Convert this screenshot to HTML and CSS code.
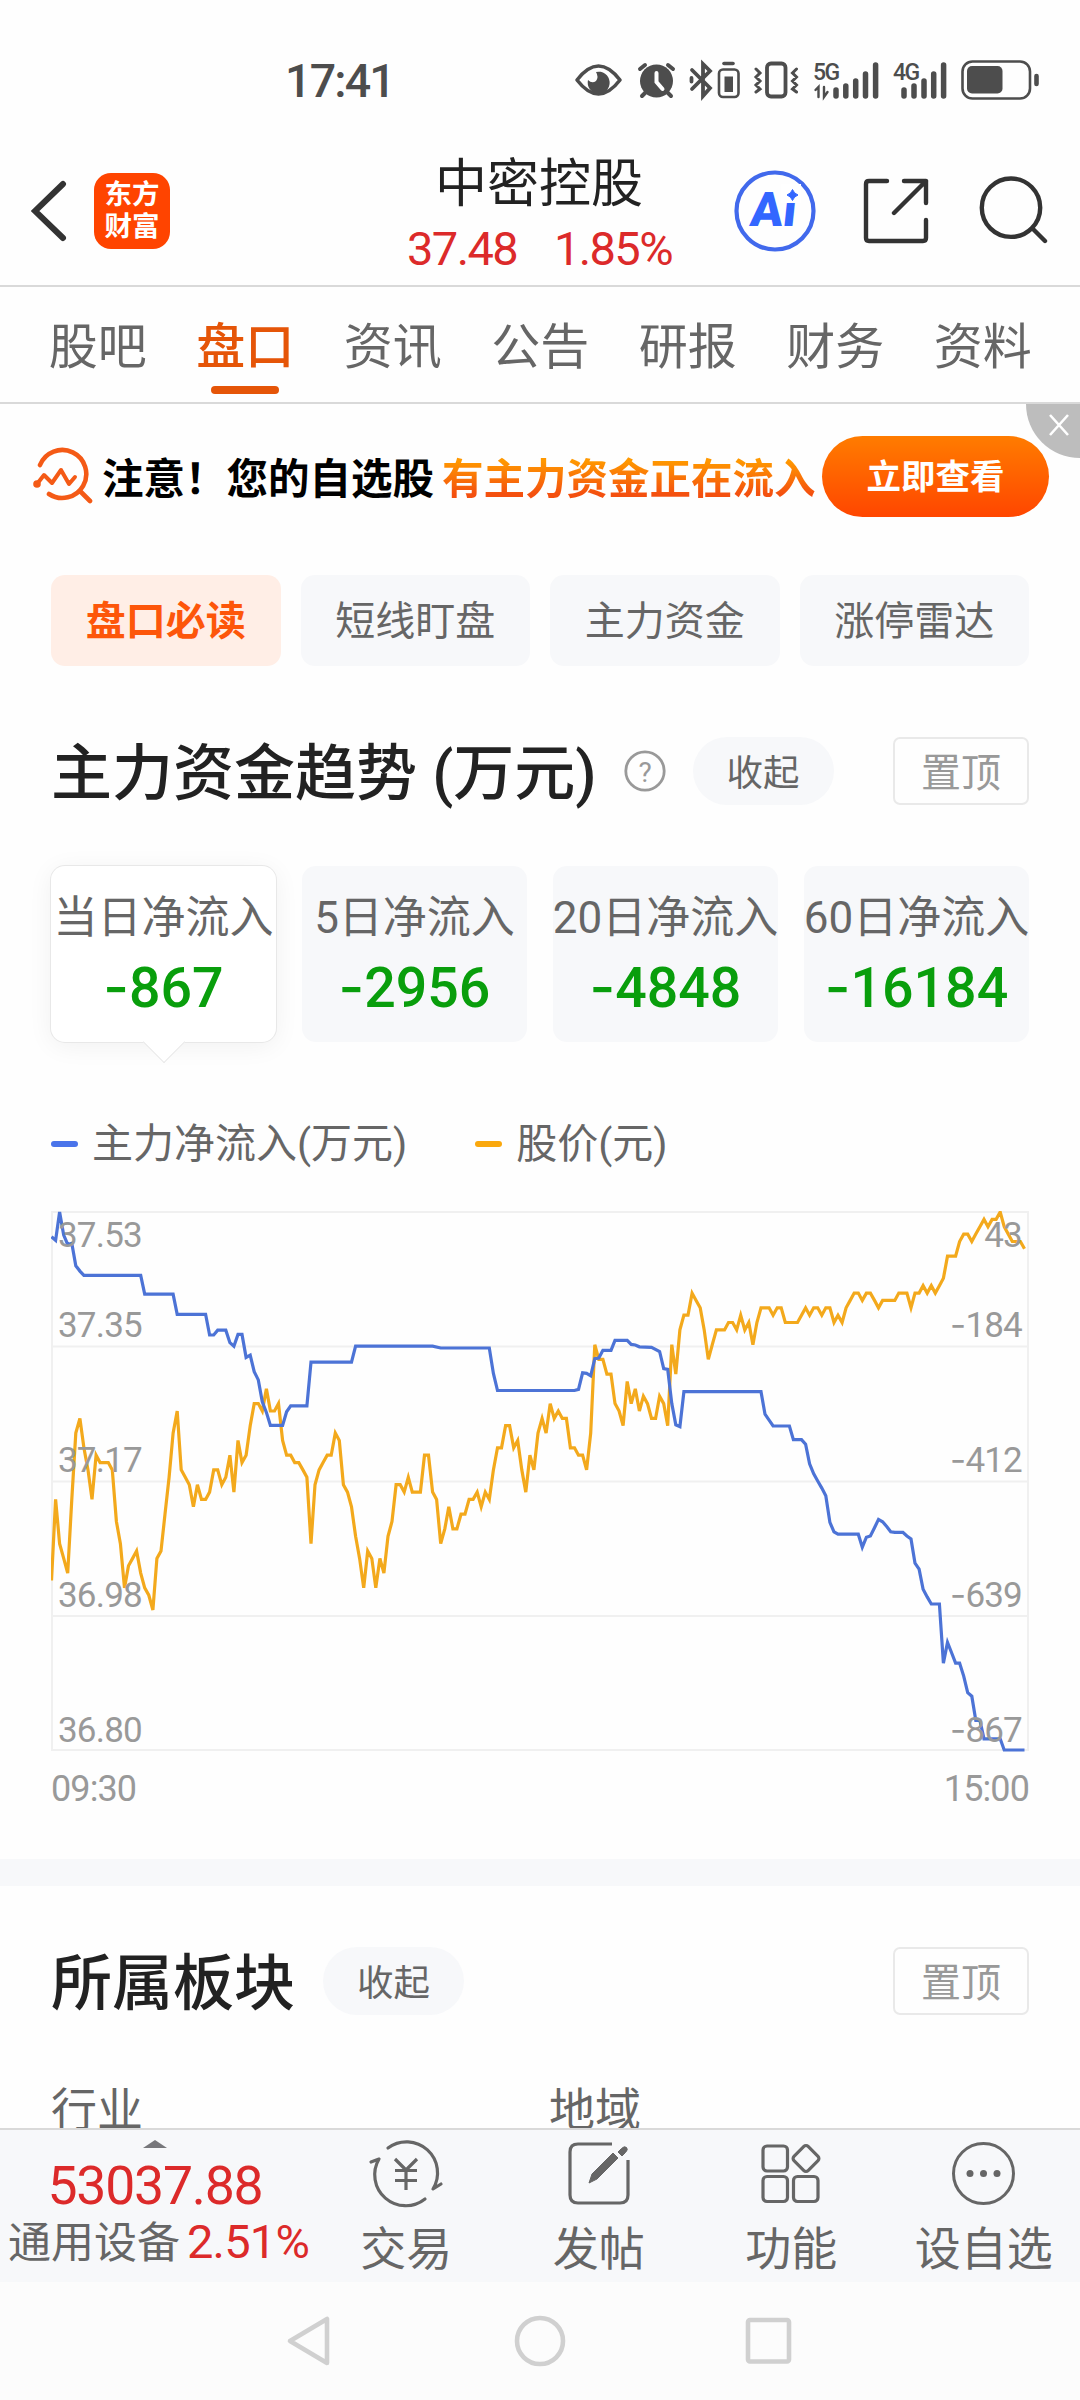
FILE: index.html
```html
<!DOCTYPE html>
<html lang="zh-CN">

<head>
    <meta charset="UTF-8">
    <meta name="viewport" content="width=device-width, initial-scale=1.0">
    <title>中密控股 - 盘口</title>
    <link rel="stylesheet" href="styles.css">
</head>

<body>
    <div class="status-bar">
        <span class="clock">17:41</span>
        <svg class="status-icons" width="475" height="48" viewBox="570 56 475 48" fill="none" stroke="#4d4d4d" stroke-width="3.6" stroke-linecap="round">
            <!-- eye -->
            <path d="M577 80Q598.500 52 620 80Q598.500 108 577 80Z" stroke-linejoin="round" />
            <path d="M596 72a11 11 0 1 1-8 8q4 4 8 1q3-4 0-9z" fill="#4d4d4d" stroke="none" />
            <!-- alarm -->
            <circle cx="656.500" cy="81" r="16.500" fill="#4d4d4d" stroke="none" />
            <path d="M640 69l5-4M673 69l-5-4M646 92l-4 4M667 92l4 4" stroke-width="4" />
            <path d="M656.500 73v9l6 7" stroke="#fff" stroke-width="4" />
            <!-- bluetooth + its battery -->
            <path d="M692 70l18 18-7 8V64l7 7-18 18M691.500 78v3.500" stroke-width="3.800" />
            <rect x="719" y="69.500" width="19.500" height="27.500" rx="4" stroke-width="2.600" />
            <path d="M724 63.500h9" stroke-width="3.600" />
            <path d="M724.500 76.500h8.500v15.500h-8.500z" fill="#4d4d4d" stroke="none" />
            <!-- vibrate -->
            <rect x="767" y="63.500" width="18.500" height="33" rx="4" stroke-width="3.800" />
            <path d="M756 69l4 4-4 4 4 4-4 4 4 4-4 3M796.500 69l-4 4 4 4-4 4 4 4-4 4 4 3" stroke-width="3" />
            <!-- signals -->
            <text class="net" x="813" y="80">5G</text>
            <path d="M815.500 90l3-3v10M824 87v10l3.500-5" stroke-width="2.400" />
            <path d="M836 90v6M845.800 86v10M855.700 81v15M865.500 74v22M875.600 65v31" stroke-width="5.500" />
            <text class="net" x="893" y="80">4G</text>
            <path d="M904 90v6M914 86v10M924 81v15M933.700 74v22M943.600 65v31" stroke-width="5.500" />
            <!-- battery -->
            <rect x="962.500" y="61.500" width="67.500" height="37" rx="10" stroke-width="2.600" />
            <rect x="967" y="66" width="35.500" height="27.500" rx="5" fill="#4d4d4d" stroke="none" />
            <path d="M1036.500 76v8" stroke-width="4.600" />
        </svg>
    </div>

    <header class="header">
        <svg class="back" width="40" height="64" viewBox="0 0 40 64" fill="none" stroke="#333" stroke-width="6" stroke-linecap="round" stroke-linejoin="miter">
            <path d="M32 5L4 32l28 27" />
        </svg>
        <div class="app-logo"><span>东方</span><span>财富</span></div>
        <div class="stock">
            <h1>中密控股</h1>
            <div class="quote"><span>37.48</span><span>1.85%</span></div>
        </div>
        <div class="header-actions">
            <svg width="82" height="82" viewBox="0 0 82 82">
                <circle cx="41" cy="41" r="38.500" fill="none" stroke="#4169ec" stroke-width="4.200" />
                <text class="ai" transform="translate(15 56) skewX(-6)">Ai</text>
                <path d="M47 14h20v19h-20z" fill="#fff" />
                <path d="M58.500 19.500q1.500 4 5.500 5.500q-4 1.500-5.500 5.500q-1.500-4-5.500-5.500q4-1.500 5.500-5.500z" fill="#3366ff" stroke="#3366ff" />
            </svg>
            <svg width="68" height="68" viewBox="0 0 68 68" fill="none" stroke="#333" stroke-width="4.400" stroke-linecap="round" stroke-linejoin="round">
                <path d="M26 4H8q-3 0-3 3v54q0 3 3 3h54q3 0 3-3V43M43 4h22v22M65 4L33 36" />
            </svg>
            <svg width="70" height="70" viewBox="0 0 70 70" fill="none" stroke="#333" stroke-width="4.400" stroke-linecap="round">
                <circle cx="33" cy="31.700" r="29.200" />
                <path d="M55 53l12 12" />
            </svg>
        </div>
    </header>

    <nav class="tabs">
        <a>股吧</a>
        <a class="active">盘口</a>
        <a>资讯</a>
        <a>公告</a>
        <a>研报</a>
        <a>财务</a>
        <a>资料</a>
    </nav>

    <div class="banner">
        <svg class="banner-icon" width="62" height="58" viewBox="0 0 62 58" fill="none" stroke="#f45a16" stroke-width="4.600" stroke-linecap="round" stroke-linejoin="round">
            <path d="M8 18a24 24 0 1 1 9 29M48 44l10 10" />
            <path d="M5 37l7-9 8 8 9-13 8 14 6-7" stroke-width="4" />
            <circle cx="5" cy="37" r="1.500" />
        </svg>
        <span class="banner-text">注意！您的自选股</span>
        <span class="banner-hot">有主力资金正在流入</span>
        <button class="banner-btn">立即查看</button>
        <span class="banner-close">
            <svg width="20" height="22" viewBox="0 0 20 22" stroke="#fff" stroke-width="2.600"><path d="M1 1l18 20M19 1L1 21" /></svg>
        </span>
    </div>

    <div class="chips">
        <span class="chip active">盘口必读</span>
        <span class="chip">短线盯盘</span>
        <span class="chip">主力资金</span>
        <span class="chip">涨停雷达</span>
    </div>

    <section class="trend">
        <div class="section-head">
            <h2>主力资金趋势 (万元)</h2>
            <svg class="help" width="44" height="44" viewBox="0 0 44 44">
                <circle cx="22" cy="22" r="19.200" fill="none" stroke="#999" stroke-width="2.800" />
                <text x="22" y="32.500" text-anchor="middle">?</text>
            </svg>
            <button class="fold">收起</button>
            <button class="pin">置顶</button>
        </div>

        <div class="cards">
            <div class="card active">
                <span>当日净流入</span>
                <b><i>-</i>867</b>
            </div>
            <div class="card">
                <span>5日净流入</span>
                <b><i>-</i>2956</b>
            </div>
            <div class="card">
                <span>20日净流入</span>
                <b><i>-</i>4848</b>
            </div>
            <div class="card">
                <span>60日净流入</span>
                <b><i>-</i>16184</b>
            </div>
        </div>

        <div class="legend">
            <span class="legend-item inflow">主力净流入(万元)</span>
            <span class="legend-item price">股价(元)</span>
        </div>

        <svg class="chart" width="978" height="542" viewBox="0 0 978 542">
            <path class="grid" d="M1 1h976v538H1zM1 135.500h976M1 270.500h976M1 405h976" />
            <polyline id="priceLine" class="line price-line" />
            <polyline id="inflowLine" class="line inflow-line" />
            <g class="axis">
                <text x="7" y="35.500">37.53</text>
                <text x="7" y="125.500">37.35</text>
                <text x="7" y="260.500">37.17</text>
                <text x="7" y="395.500">36.98</text>
                <text x="7" y="530.500">36.80</text>
            </g>
            <g class="axis axis-right">
                <text x="971" y="35.500">43</text>
                <text x="971" y="125.500"><tspan class="minus">-</tspan>184</text>
                <text x="971" y="260.500"><tspan class="minus">-</tspan>412</text>
                <text x="971" y="395.500"><tspan class="minus">-</tspan>639</text>
                <text x="971" y="530.500"><tspan class="minus">-</tspan>867</text>
            </g>
        </svg>
        <div class="times"><span>09:30</span><span>15:00</span></div>
    </section>

    <section class="plates">
        <div class="section-head">
            <h2>所属板块</h2>
            <button class="fold">收起</button>
            <button class="pin">置顶</button>
        </div>
        <div class="plate-cols"><span>行业</span><span>地域</span></div>
    </section>

    <footer class="toolbar">
        <div class="index">
            <span class="caret"></span>
            <span class="index-value">53037.88</span>
            <span class="index-name">通用设备<em>2.51%</em></span>
        </div>
        <div class="tool">
            <svg width="76" height="70" viewBox="0 0 76 70" fill="none" stroke="#666" stroke-width="3.200" stroke-linecap="round" stroke-linejoin="round">
                <path d="M20 10A31 31 0 0 1 65 51l8-5M57 61A31 31 0 0 1 11 21l-8 3" />
                <path d="M27 21l11 11 11-11M27 32.500h22M27 42.500h22M38 32v20" stroke-linecap="butt" />
            </svg>
            <span>交易</span>
        </div>
        <div class="tool">
            <svg width="70" height="70" viewBox="0 0 70 70" fill="none" stroke="#666" stroke-width="3.200">
                <path d="M48 6H14q-8 0-8 8v43q0 8 8 8h42q8 0 8-8V22" />
                <path d="M54 14l3.500-3.500q3-3 5-1t-1 5L58 18zM25 45l3-9 21-21 5 5-21 21z" fill="#666" stroke-width="1" />
            </svg>
            <span>发帖</span>
        </div>
        <div class="tool">
            <svg width="70" height="70" viewBox="0 0 70 70" fill="none" stroke="#666" stroke-width="3.200">
                <rect x="7" y="8" width="24.500" height="25" rx="4" />
                <rect x="7" y="38.500" width="24.500" height="25" rx="4" />
                <rect x="37.500" y="38.500" width="24.500" height="25" rx="4" />
                <rect x="40" y="10.500" width="20" height="20" rx="3" transform="rotate(45 50 20.500)" />
            </svg>
            <span>功能</span>
        </div>
        <div class="tool">
            <svg width="70" height="70" viewBox="0 0 70 70" fill="#666">
                <circle cx="34.500" cy="35.500" r="30" fill="none" stroke="#666" stroke-width="3" />
                <circle cx="21" cy="35.500" r="3.500" />
                <circle cx="34.500" cy="35.500" r="3.500" />
                <circle cx="48" cy="35.500" r="3.500" />
            </svg>
            <span>设自选</span>
        </div>
    </footer>

    <div class="system-nav">
        <svg width="50" height="56" viewBox="0 0 50 56"><path d="M42 6v44L5 28z" /></svg>
        <svg width="56" height="56" viewBox="0 0 56 56"><circle cx="28" cy="28" r="23" /></svg>
        <svg width="50" height="56" viewBox="0 0 50 56"><rect x="4" y="7" width="41" height="41.500" rx="2" /></svg>
    </div>

    <script>
        // 每分钟股价，单位：低于最高价 37.53 的分数
        const priceTicks = [
            50, 39, 45, 47, 49, 39, 30, 28, 32, 35, 39, 33, 34, 34, 34, 35, 42, 45, 51, 48,
            47, 46, 49, 51, 52, 54, 47, 46, 41, 36, 30, 27, 35, 36, 37, 40, 37, 39, 39, 38,
            35, 35, 37, 36, 33, 38, 31, 34, 33, 29, 26, 26, 27, 24, 27, 27, 26, 31, 33, 33,
            34, 34, 35, 36, 45, 37, 35, 34, 33, 33, 30, 31, 37, 38, 40, 44, 47, 51, 46, 47,
            51, 47, 49, 44, 42, 37, 37, 38, 36, 38, 38, 38, 33, 33, 38, 39, 45, 43, 40, 43,
            43, 41, 41, 39, 39, 38, 40, 38, 39, 35, 32, 32, 29, 29, 32, 31, 35, 38, 33, 35,
            30, 28, 30, 26, 28, 27, 28, 28, 32, 32, 33, 33, 35, 30, 18, 20, 20, 22, 22, 26,
            27, 29, 23, 26, 24, 27, 25, 26, 28, 28, 25, 26, 29, 18, 22, 16, 14, 14, 11, 12,
            13, 16, 20, 18, 16, 16, 16, 15, 15, 16, 14, 16, 15, 18, 15, 13, 13, 13, 14, 13,
            13, 15, 15, 15, 15, 14, 13, 14, 13, 13, 14, 13, 13, 15, 14, 15, 13, 12, 11, 11,
            12, 11, 11, 12, 13, 12, 12, 12, 12, 11, 11, 11, 13, 11, 11, 10, 11, 10, 11, 10,
            9, 6, 6, 6, 4, 3, 3, 4, 3, 2, 1, 2, 1, 1, 0, 2, 3, 4, 4, 4, 5
        ];

        // 主力净流入 [分钟, 万元]
        const inflow = [
            [0, 1], [1, -5], [2, 43], [3, 4], [4, -12], [5, -10], [6, -48], [7, -57], [8, -64],
            [22, -64], [23, -96], [30, -96], [31, -130], [38, -130], [39, -165], [40, -165],
            [41, -157], [43, -157], [44, -178], [45, -184], [46, -164], [47, -164], [48, -203],
            [49, -199], [50, -227], [51, -241], [52, -278], [53, -296], [54, -318], [57, -318],
            [58, -295], [59, -285], [63, -285], [64, -211], [74, -211], [75, -184], [94, -184],
            [96, -187], [108, -187], [109, -230], [110, -259], [129, -259], [130, -257],
            [131, -229], [132, -230], [133, -234], [134, -205], [135, -204], [136, -191],
            [138, -191], [139, -174], [142, -174], [143, -181], [144, -182], [145, -185],
            [148, -186], [150, -193], [151, -222], [152, -223], [153, -281], [154, -317],
            [155, -320], [156, -261], [175, -261], [176, -299], [177, -309], [178, -319],
            [182, -319], [183, -342], [185, -342], [186, -350], [187, -383], [188, -400],
            [189, -412], [190, -424], [191, -437], [192, -482], [193, -498], [194, -502],
            [199, -502], [200, -524], [201, -507], [202, -505], [203, -491], [204, -477],
            [205, -481], [206, -489], [207, -498], [208, -499], [210, -499], [211, -505],
            [212, -510], [213, -551], [214, -561], [215, -595], [216, -608], [217, -620],
            [219, -620], [220, -720], [221, -685], [222, -702], [223, -720], [224, -720],
            [225, -742], [226, -770], [227, -776], [228, -817], [229, -817], [230, -848],
            [234, -848], [235, -867], [240, -867]
        ];

        const STEP = 973 / 240;
        const HEIGHT = 538;

        function toPoints(rows) {
            return rows.map(r => (0.5 + r[0] * STEP).toFixed(1) + ',' + (1 + r[1] * HEIGHT).toFixed(1)).join(' ');
        }

        document.getElementById('priceLine').setAttribute('points',
            toPoints(priceTicks.map((t, i) => [i, t / 73])));
        document.getElementById('inflowLine').setAttribute('points',
            toPoints(inflow.map(r => [r[0], (43 - r[1]) / 910])));
    </script>
</body>

</html>
```
FILE: styles.css
```css
* {
    box-sizing: border-box;
}

body {
    margin: 0;
    width: 1080px;
    height: 2400px;
    overflow: hidden;
    display: flex;
    flex-direction: column;
    background: #fefefe;
    color: #666;
    font-family: Roboto, "Noto Sans CJK SC", sans-serif;
}

h1,
h2 {
    margin: 0;
    color: #222;
}

button {
    border: none;
    padding: 0;
    font-family: inherit;
    color: inherit;
}

svg {
    display: block;
    flex: none;
}

/* status bar */
.status-bar {
    height: 136px;
    flex: none;
    display: flex;
    justify-content: space-between;
    padding: 56px 35px 0 285px;
}

.clock {
    font-size: 46.500px;
    line-height: 50px;
    font-weight: 500;
    letter-spacing: -1.800px;
    color: #4d4d4d;
}

.net {
    font: 500 23px Roboto, sans-serif;
    letter-spacing: -1.500px;
    fill: #4d4d4d;
    stroke: none;
}

/* header */
.header {
    height: 151px;
    flex: none;
    display: grid;
    grid-template-columns: 63px 313px 264px 1fr;
    padding-left: 31px;
    border-bottom: 2px solid #d9d9d9;
}

.back {
    margin-top: 43px;
}

.app-logo {
    width: 76px;
    height: 76px;
    margin-top: 37px;
    padding-top: 6px;
    border-radius: 17px;
    background: #ff4400;
    color: #fff;
    font-size: 27.500px;
    line-height: 32px;
    font-weight: 700;
    text-align: center;
}

.app-logo span {
    display: block;
}

.stock {
    text-align: center;
}

.stock h1 {
    margin-top: 19px;
    font-size: 52px;
    line-height: 60px;
    font-weight: 400;
}

.quote {
    display: flex;
    justify-content: space-between;
    margin-top: 6px;
    margin-right: -1px;
    font-size: 47px;
    line-height: 56px;
    letter-spacing: -1.600px;
    color: #dc2a2a;
}

.header-actions {
    display: flex;
    align-items: flex-start;
    margin-left: 63px;
    padding-top: 34px;
}

.header-actions svg:nth-child(2) {
    margin: 7px 0 0 45px;
}

.header-actions svg:nth-child(3) {
    margin: 6px 0 0 49px;
}

.ai {
    font: 900 48px Roboto, sans-serif;
    fill: #3366ff;
}

/* tabs */
.tabs {
    height: 117px;
    flex: none;
    display: grid;
    grid-template-columns: repeat(7, 147.500px);
    padding-left: 24px;
    border-bottom: 2px solid #d9d9d9;
    font-size: 49px;
    line-height: 60px;
    text-align: center;
}

.tabs a {
    padding-top: 31px;
}

.tabs .active {
    color: #e55508;
    font-weight: 500;
}

.tabs .active::after {
    content: "";
    display: block;
    width: 68px;
    height: 8px;
    margin: 8px auto 0;
    border-radius: 4px;
    background: #e55508;
}

/* banner */
.banner {
    position: relative;
    height: 151px;
    flex: none;
    display: flex;
    align-items: center;
    padding: 0 0 7px 32px;
    font-size: 41.500px;
    font-weight: 700;
    white-space: nowrap;
}

.banner-icon {
    margin-right: 8px;
}

.banner-text {
    width: 340px;
    color: #000;
}

.banner-hot {
    width: 380px;
    background: linear-gradient(#ff9800 25%, #f4500f 80%);
    background-clip: text;
    -webkit-background-clip: text;
    color: transparent;
}

.banner-btn {
    width: 227px;
    height: 81px;
    padding-bottom: 5px;
    border-radius: 41px;
    background: linear-gradient(#ff7c00, #ff4600);
    color: #fff;
    font-size: 34.500px;
    font-weight: 700;
}

.banner-close {
    position: absolute;
    top: 0;
    right: 0;
    width: 54px;
    height: 54px;
    padding: 10px 0 0 23px;
    border-bottom-left-radius: 54px;
    background: #bdbdbd;
}

/* chips */
.chips {
    display: grid;
    grid-template-columns: repeat(4, 1fr);
    gap: 20px;
    margin: 20px 51px 0;
}

.chip {
    height: 91px;
    border-radius: 14px;
    background: #f7f8fa;
    font-size: 40px;
    line-height: 94px;
    text-align: center;
}

.chip.active {
    background: #ffeee6;
    color: #fd560a;
    font-weight: 700;
}

/* sections */
.trend {
    height: 1220px;
    flex: none;
    padding: 71px 51px 0;
    border-bottom: 27px solid #f7f8fa;
}

.section-head {
    display: flex;
    align-items: center;
    height: 68px;
}

.section-head h2 {
    padding-top: 6px;
    font-size: 61px;
    line-height: 68px;
    font-weight: 500;
    white-space: nowrap;
}

.help {
    margin: 0 26px;
}

.help text {
    font: 28px Roboto, sans-serif;
    fill: #999;
}

.fold {
    width: 141px;
    height: 68px;
    padding-bottom: 2px;
    border-radius: 34px;
    background: #f7f8fa;
    font-size: 36.500px;
}

.pin {
    width: 136px;
    height: 68px;
    margin-left: auto;
    padding-bottom: 3px;
    border: 2px solid #e9e9e9;
    border-radius: 7px;
    background: none;
    font-size: 40px;
    color: #999;
}

/* cards */
.cards {
    display: grid;
    grid-template-columns: repeat(4, 225px);
    justify-content: space-between;
    margin-top: 61px;
}

.card {
    display: flex;
    flex-direction: column;
    align-items: center;
    height: 176px;
    padding-top: 22px;
    border-radius: 14px;
    background: #f7f8fa;
    white-space: nowrap;
}

.card span {
    font-size: 44px;
    line-height: 60px;
}

.card b {
    margin-top: 7px;
    font-size: 55.500px;
    line-height: 64px;
    font-weight: 500;
    color: #099e0c;
}

.card i {
    font-family: Inter, sans-serif;
    font-style: normal;
}

.card.active {
    position: relative;
    background: #fff;
    box-shadow: 0 0 0 1px #e8e8e8, 0 4px 26px rgba(0, 0, 0, 0.060);
}

.card.active::after {
    content: "";
    position: absolute;
    left: 98px;
    bottom: -15px;
    width: 29px;
    height: 29px;
    border: solid #e8e8e8;
    border-width: 0 1px 1px 0;
    background: #fff;
    transform: rotate(45deg);
}

/* legend */
.legend {
    display: flex;
    gap: 68px;
    margin-top: 72px;
    font-size: 41px;
    line-height: 60px;
}

.legend-item {
    display: flex;
    align-items: center;
}

.legend-item::before {
    content: "";
    width: 27px;
    height: 6px;
    margin-right: 14px;
    border-radius: 3px;
}

.inflow::before {
    background: #4a74ea;
}

.price::before {
    background: #faa80d;
}

/* chart */
.chart {
    margin-top: 37px;
}

.grid {
    fill: none;
    stroke: #f0f0f0;
    stroke-width: 2;
}

.line {
    fill: none;
    stroke-width: 3.200;
}

.price-line {
    stroke: #f3a91c;
}

.inflow-line {
    stroke: #4c73d6;
}

.axis {
    font-size: 35px;
    letter-spacing: -0.800px;
    fill: #999;
}

.axis-right {
    text-anchor: end;
}

.minus {
    font-family: Inter, sans-serif;
}

.times {
    display: flex;
    justify-content: space-between;
    margin-top: 14px;
    font-size: 36px;
    line-height: 44px;
    letter-spacing: -0.900px;
    color: #999;
}

.plates {
    flex: 1;
    overflow: hidden;
    padding: 61px 51px 0;
}

.plates .fold {
    margin-left: 28px;
}

.plate-cols {
    display: grid;
    grid-template-columns: 498px 1fr;
    margin-top: 65px;
    font-size: 46px;
    line-height: 60px;
}

/* bottom toolbar */
.toolbar {
    height: 154px;
    flex: none;
    display: grid;
    grid-template-columns: 310px repeat(4, 192.500px);
    border-top: 2px solid #d9d9d9;
    background: #f7f8fa;
}

.index {
    display: flex;
    flex-direction: column;
    align-items: center;
    padding-top: 10px;
    white-space: nowrap;
}

.caret {
    border: solid transparent;
    border-width: 0 12px 8px;
    border-bottom-color: #77777b;
}

.index-value {
    margin-top: 8px;
    font-size: 53.500px;
    line-height: 60px;
    letter-spacing: -1.200px;
    color: #dc2a2a;
}

.index-name {
    font-size: 43px;
    line-height: 54px;
    margin: -1px 0 0 7px;
}

.index-name em {
    margin-left: 7px;
    font-size: 47px;
    font-style: normal;
    letter-spacing: -0.800px;
    color: #dc2a2a;
}

.tool {
    display: flex;
    flex-direction: column;
    align-items: center;
    padding-top: 8px;
    font-size: 46px;
    line-height: 60px;
}

.tool span {
    margin-top: 11px;
}

/* system navigation */
.system-nav {
    height: 118px;
    flex: none;
    display: flex;
    justify-content: space-between;
    padding: 31px 286px 0 285px;
    background: #fcfcfc;
}

.system-nav svg {
    fill: none;
    stroke: #d0d0d0;
    stroke-width: 4.600;
    stroke-linejoin: round;
}
```
